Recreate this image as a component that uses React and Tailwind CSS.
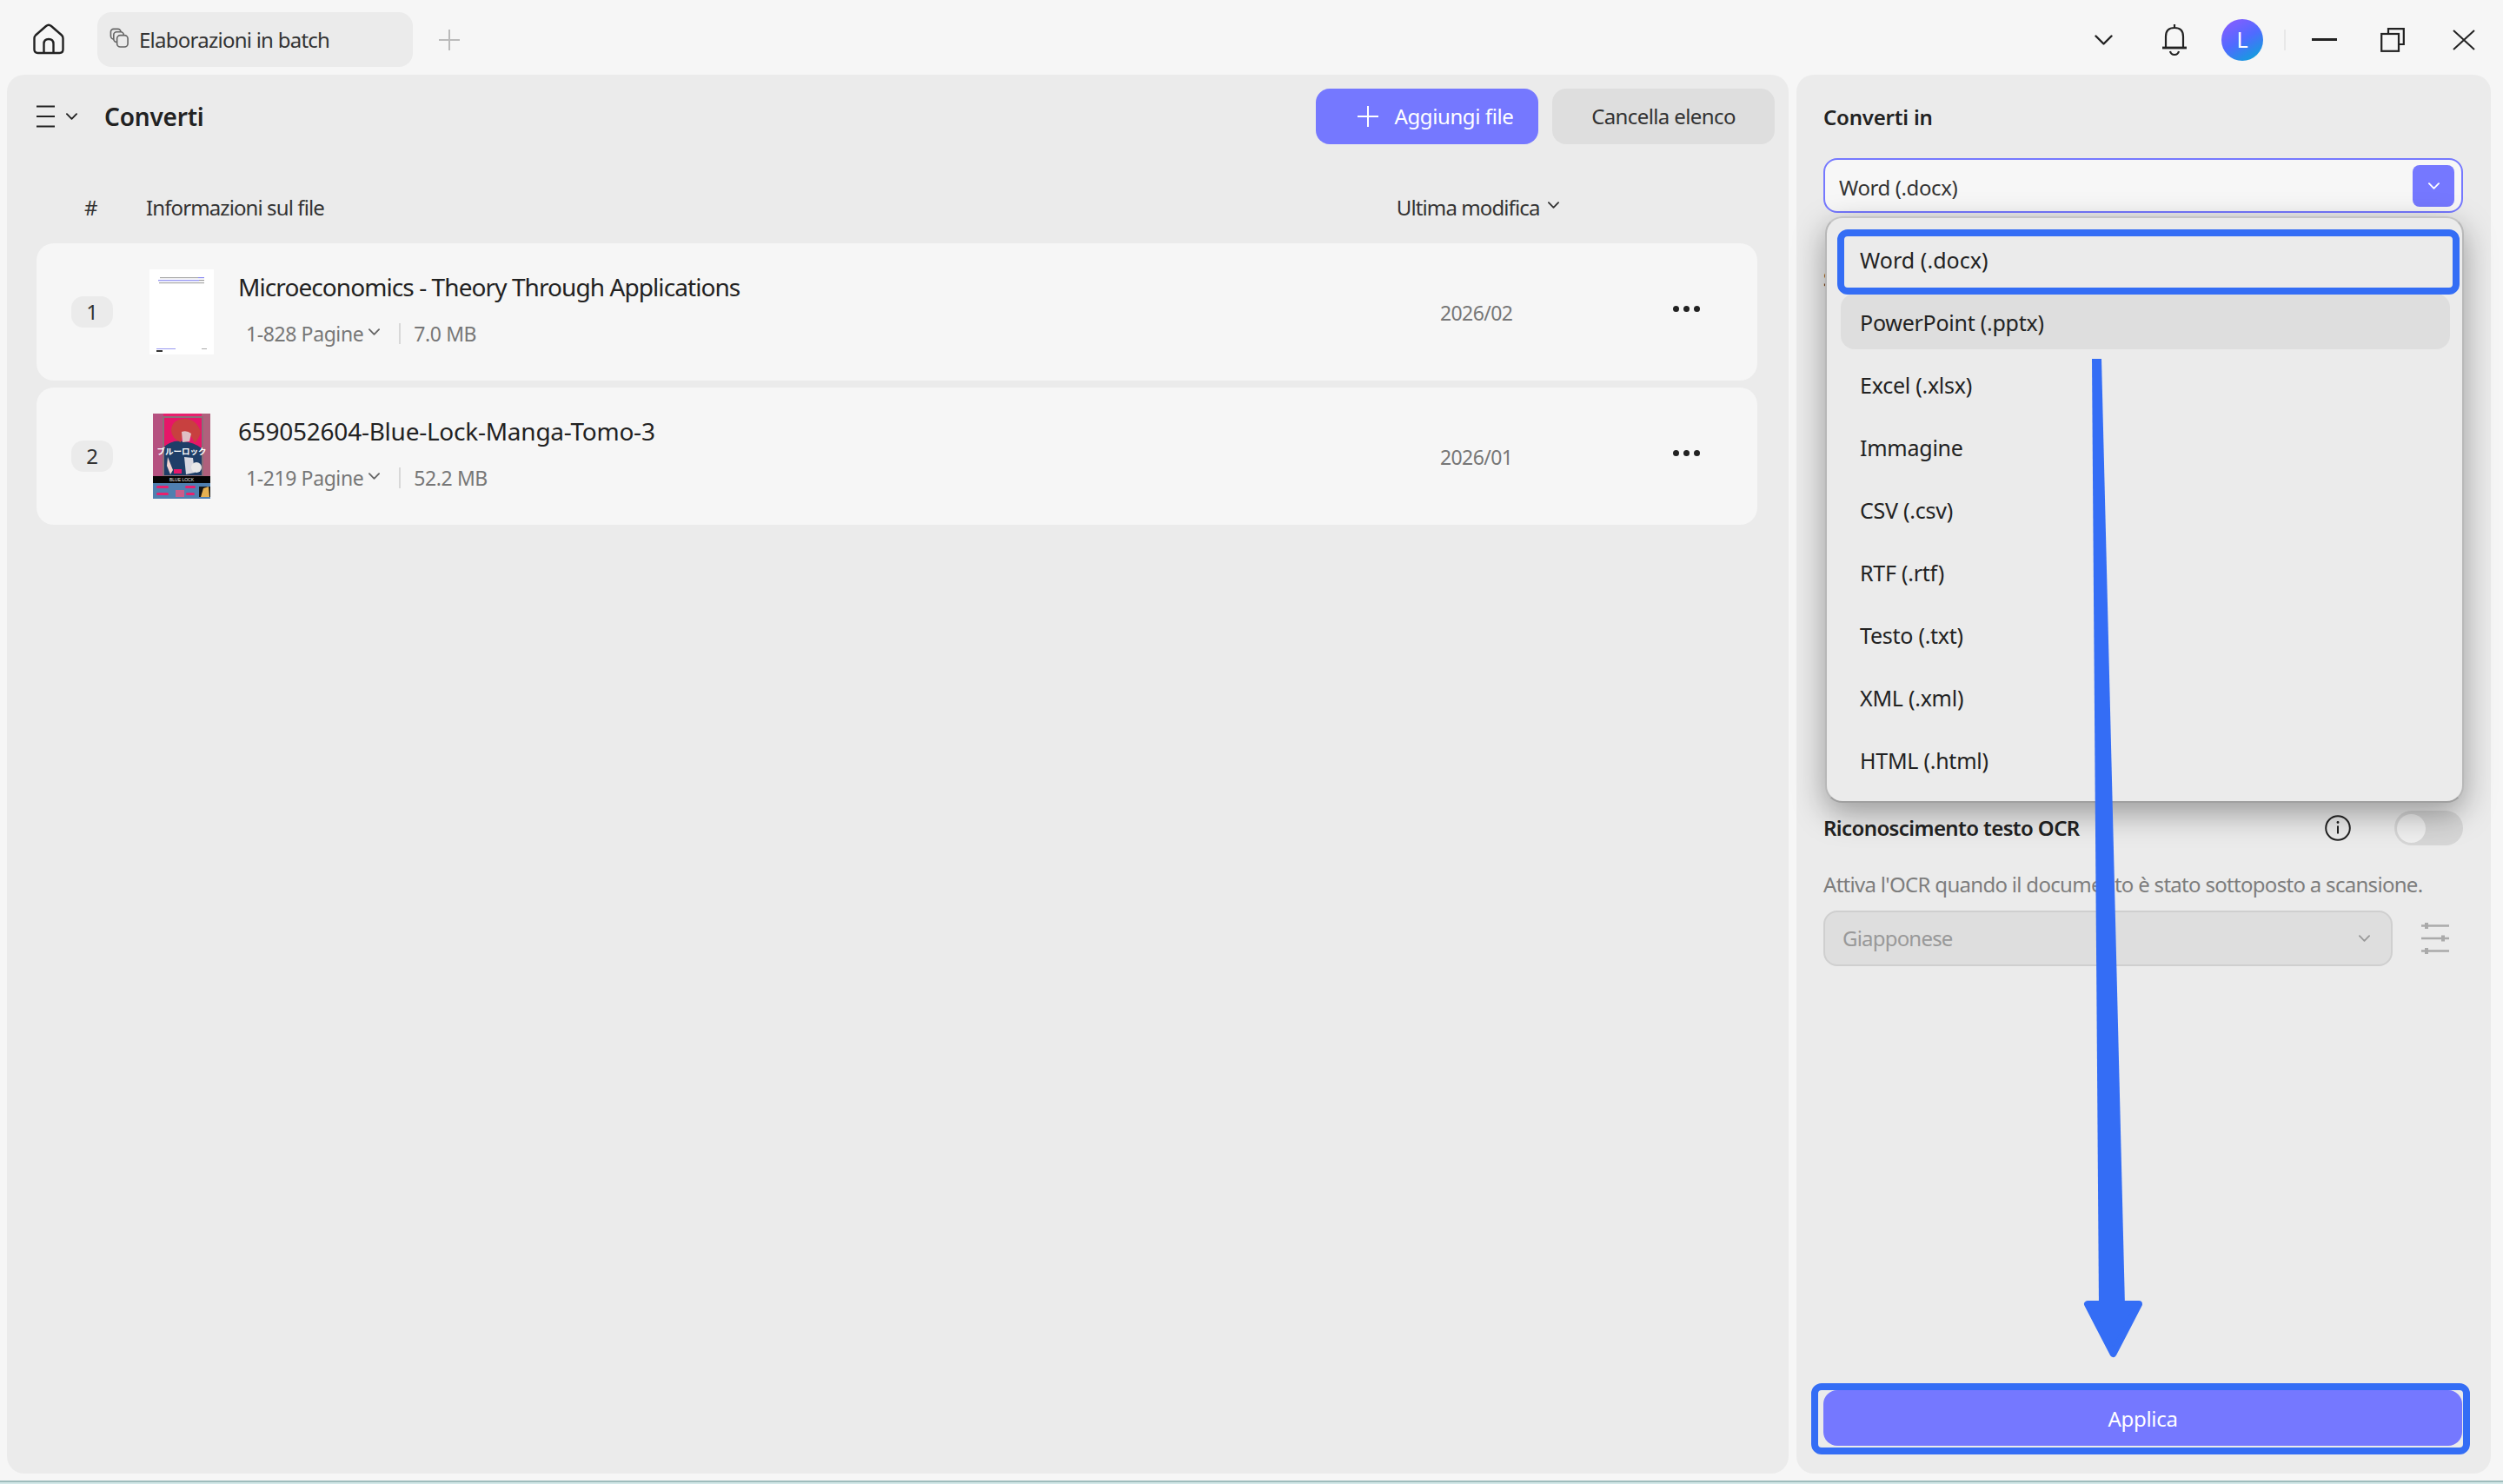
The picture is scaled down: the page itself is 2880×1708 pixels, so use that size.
const FORMATS = ["Excel (.xlsx)", "Immagine", "CSV (.csv)", "RTF (.rtf)", "Testo (.txt)", "XML (.xml)", "HTML (.html)"];

function Chevron({ className, stroke = "#222", width = 2 }) {
  return (
    <svg viewBox="0 0 14 8" className={className} fill="none">
      <path d="M1 1l6 6 6-6" stroke={stroke} strokeWidth={width} strokeLinecap="round" strokeLinejoin="round" />
    </svg>
  );
}

function DocThumb() {
  return (
    <svg viewBox="0 0 74 98" className="w-[74px] h-[98px] shrink-0">
      <rect width="74" height="98" fill="#fff" />
      <rect x="12" y="9" width="44" height="1.2" fill="#aaa" />
      <rect x="56" y="9" width="7" height="1.2" fill="#8c8cf0" />
      <rect x="10" y="12" width="47" height="1.4" fill="#9a9af2" />
      <rect x="57" y="12" width="6" height="1.2" fill="#999" />
      <rect x="11" y="15" width="52" height="1.2" fill="#aaa" />
      <rect x="8" y="91" width="22" height="1" fill="#9a9af2" />
      <rect x="8" y="93" width="7" height="2" fill="#333" />
      <rect x="60" y="91" width="6" height="1" fill="#aaa" />
    </svg>
  );
}

function MangaThumb() {
  return (
    <svg viewBox="0 0 66 98" className="w-[66px] h-[98px] shrink-0">
      <rect width="66" height="98" fill="#e8206e" />
      <rect x="0" y="0" width="12" height="72" fill="#8a7a90" opacity="0.55" />
      <rect x="56" y="0" width="10" height="72" fill="#b0607c" />
      <rect x="12" y="4" width="45" height="68" fill="#e61668" stroke="#8a6f78" strokeWidth="2" />
      <path d="M13 38q10-8 22-6 12 1 21 8v31H13z" fill="#1e3e68" />
      <path d="M21 20q0-13 15-14 14 0 19 15-2 8-7 13l-3-6q-3-5-11-4l-2 9q-10-4-11-13z" fill="#c8403f" />
      <path d="M33 21q6-2 11 2l-2 9-8 1z" fill="#dfc0c4" />
      <path d="M36 50l10 1 2 17-10 2z" fill="#d8d8e0" />
      <circle cx="50" cy="62" r="6" fill="#e8e8e8" />
      <path d="M17 50l6 15-3 5-4-10z" fill="#f1d4d0" />
      <rect x="24" y="64" width="9" height="5" fill="#e61668" />
      <text x="33" y="47" textAnchor="middle" fontSize="9.500" fontWeight="700" fill="#fff" fontFamily="'Noto Sans CJK JP', sans-serif">ブルーロック</text>
      <rect x="0" y="72" width="66" height="8" fill="#050505" />
      <text x="33" y="78" textAnchor="middle" fontSize="5" fill="#eee" fontFamily="'Liberation Sans', sans-serif">BLUE LOCK</text>
      <rect x="0" y="80" width="66" height="18" fill="#4f7fb0" />
      <rect x="4" y="83" width="14" height="3" rx="1.5" fill="#e8206e" />
      <rect x="37" y="83" width="12" height="3" rx="1.5" fill="#e8206e" />
      <rect x="4" y="91" width="14" height="3" rx="1.5" fill="#e8206e" />
      <rect x="26" y="88" width="10" height="8" fill="#c95d8a" />
      <rect x="38" y="91" width="10" height="3" rx="1.5" fill="#e8206e" />
      <rect x="53" y="84" width="13" height="12" fill="#151515" />
      <path d="M55 96l3-10 6-2 1 12z" fill="#e5b050" />
    </svg>
  );
}

function FileRow({ index, title, titleClass, pages, size, date, thumb }) {
  return (
    <div className="h-[158px] rounded-[20px] bg-[#f6f6f6] flex items-center pl-10">
      <div className="w-12 h-9 rounded-[14px] bg-[#ebebeb] flex items-center justify-center text-[24px] text-[#333] shrink-0">{index}</div>
      <div className="w-[74px] ml-[42px] flex justify-center shrink-0">{thumb}</div>
      <div className="ml-[28px] w-[1387px] -translate-y-[4px]">
        <div className={`text-[28px] leading-[38px] text-[#222] ${titleClass}`}>{title}</div>
        <div className="flex items-center mt-[19px] ml-[9px] text-[23px] leading-8 text-[#777] tracking-[-0.4px]">
          <span>{pages}</span>
          <Chevron className="w-[13px] h-2 ml-[6px] -translate-y-[2px]" stroke="#666" />
          <span className="w-[2px] h-6 bg-[#d8d8d8] ml-[22px] mr-[15px]" />
          <span>{size}</span>
        </div>
      </div>
      <div className="w-[83px] -ml-[4px] text-[23px] text-[#777] tracking-[-0.6px] whitespace-nowrap translate-y-[1px]">{date}</div>
      <div className="flex gap-[5px] ml-[185px] -translate-y-[4px]">
        <span className="w-[7px] h-[7px] rounded-full bg-[#222]" />
        <span className="w-[7px] h-[7px] rounded-full bg-[#222]" />
        <span className="w-[7px] h-[7px] rounded-full bg-[#222]" />
      </div>
    </div>
  );
}

export default function App() {
  return (
    <div className="relative w-[2880px] h-[1708px] overflow-hidden bg-[#f6f6f6] flex flex-col font-['Noto_Sans',sans-serif]">
      {/* Title bar */}
      <div className="h-[86px] shrink-0 flex items-center pl-[38px] pt-[5px] relative">
        <svg viewBox="0 0 36 36" className="w-9 h-9 -translate-y-[1px]" fill="none" stroke="#222" strokeWidth="2.4">
          <path d="M3 13.5L15 3q3-2.4 6 0l12 10.500q1.500 1.400 1.500 3.500V30q0 4-4 4H5.500q-4 0-4-4V17q0-2 1.500-3.500z" />
          <path d="M12.500 34V23.500q0-5.500 5.500-5.500t5.500 5.500V34" />
        </svg>
        <div className="ml-[38px] w-[363px] h-[63px] rounded-2xl bg-[#ebebeb] flex items-center pl-[14px]">
          <svg viewBox="0 0 24 24" className="w-[23px] h-[23px] -translate-y-[2px]" fill="none" stroke="#666" strokeWidth="1.7">
            <rect x="1.500" y="1.500" width="12" height="12" rx="3.500" />
            <rect x="5" y="5" width="12" height="12" rx="3.500" fill="#ebebeb" />
            <rect x="9" y="9" width="13" height="14" rx="4" fill="#ebebeb" />
          </svg>
          <span className="ml-[11px] text-[24px] text-[#333] tracking-[-0.75px] whitespace-nowrap">Elaborazioni in batch</span>
        </div>
        <svg viewBox="0 0 24 24" className="w-6 h-6 ml-[30px]" fill="none" stroke="#bbb" strokeWidth="2">
          <path d="M12 0v24M0 12h24" />
        </svg>

        <div className="ml-auto flex items-center pr-[32px]">
          <Chevron className="w-[23px] h-3" stroke="#222" width={1.6} />
          <svg viewBox="0 0 30 38" className="w-[30px] h-[38px] ml-[55px]" fill="none" stroke="#222" strokeWidth="2.2">
            <path d="M15 1v4M5 27V15q0-10 10-10t10 10v12" />
            <path d="M1 28h28" strokeWidth="2.800" />
            <path d="M10 32q1 4 5 4t5-4" />
          </svg>
          <div className="ml-[39px] w-12 h-12 rounded-full bg-[linear-gradient(150deg,#8a5cff_5%,#4f6bff_50%,#0aa5d8_95%)] flex items-center justify-center text-white text-[25px]">L</div>
          <span className="w-[2px] h-6 bg-[#e8e8e8] ml-6" />
          <span className="w-[29px] h-[3px] bg-[#222] ml-[30px]" />
          <svg viewBox="0 0 28 28" className="w-7 h-7 ml-[50px]" fill="none" stroke="#222" strokeWidth="2.2">
            <path d="M9 7V1.200h17.800V19H21" />
            <rect x="1.200" y="7" width="19.800" height="19.800" />
          </svg>
          <svg viewBox="0 0 26 24" className="w-[26px] h-6 ml-[55px]" fill="none" stroke="#222" strokeWidth="2">
            <path d="M1 1l24 22M25 1L1 23" />
          </svg>
        </div>
      </div>

      {/* Panels */}
      <div className="flex-1 flex pl-2 gap-[9px]">
        <div className="w-[2050px] rounded-[20px] bg-[#ebebeb] pt-4 pl-[34px] pr-4">
          <div className="flex items-center h-16">
            <svg viewBox="0 0 22 26" className="w-[22px] h-[26px]" fill="none" stroke="#222" strokeWidth="2.200">
              <path d="M0 1.500h21M0 13h21M0 24.500h21" />
            </svg>
            <Chevron className="w-[13px] h-2 ml-[12px]" stroke="#222" />
            <span className="ml-[31px] text-[28px] font-semibold text-[#222] tracking-[-0.2px]">Converti</span>
            <button className="ml-auto w-64 h-16 rounded-2xl bg-[#7578ff] pl-[19px] flex items-center justify-center text-white text-[24px] tracking-[-0.4px]">
              <svg viewBox="0 0 24 24" className="w-6 h-6 mr-[19px]" fill="none" stroke="#fff" strokeWidth="2">
                <path d="M12 0v24M0 12h24" />
              </svg>
              Aggiungi file
            </button>
            <button className="ml-4 w-64 h-16 rounded-2xl bg-[#dedede] text-[#333] text-[24px] tracking-[-0.6px]">Cancella elenco</button>
          </div>
          <div className="flex items-center h-[40px] mt-[53px] text-[24px] text-[#333] tracking-[-0.9px]">
            <span className="ml-[55px] w-[71px]">#</span>
            <span>Informazioni sul file</span>
            <span className="ml-[1234px] whitespace-nowrap">Ultima modifica</span>
            <Chevron className="w-[13px] h-2 ml-[10px] -translate-y-[3px]" stroke="#333" />
          </div>
          <div className="mt-[21px] w-[1980px] flex flex-col gap-2">
            <FileRow index="1" title="Microeconomics - Theory Through Applications" titleClass="tracking-[-0.92px]" pages="1-828 Pagine" size="7.0 MB" date="2026/02" thumb={<DocThumb />} />
            <FileRow index="2" title="659052604-Blue-Lock-Manga-Tomo-3" titleClass="tracking-[-0.25px]" pages="1-219 Pagine" size="52.2 MB" date="2026/01" thumb={<MangaThumb />} />
          </div>
        </div>

        <div className="relative w-[799px] rounded-[20px] bg-[#ebebeb] px-[31px] flex flex-col">
          <div className="mt-[31px] h-9 flex items-center text-[24px] font-semibold text-[#222] tracking-[-0.2px]">Converti in</div>
          <div className="mt-[29px] h-[63px] w-[736px] rounded-2xl border-2 border-[#7578ff] bg-[#f7f7f7] flex items-center pl-4 pr-2 text-[24px] text-[#333] tracking-[-0.4px]">
            <span className="translate-y-[2px]">Word (.docx)</span>
            <span className="ml-auto w-12 h-12 rounded-lg bg-[#7578ff] flex items-center justify-center">
              <Chevron className="w-[13px] h-2" stroke="#fff" />
            </span>
          </div>
          <span className="mt-[60px] text-[24px] font-semibold text-[#222] leading-[32px]">S</span>

          {/* OCR section */}
          <div className="mt-[596px] h-10 flex items-center">
            <span className="w-[296px] text-[24px] font-semibold text-[#222] tracking-[-0.6px] whitespace-nowrap">Riconoscimento testo OCR</span>
            <svg viewBox="0 0 30 30" className="w-[30px] h-[30px] ml-[281px]" fill="none" stroke="#222" strokeWidth="2">
              <circle cx="15" cy="15" r="13.800" />
              <path d="M15 12.500v9" />
              <circle cx="15" cy="8.500" r="1.400" fill="#222" stroke="none" />
            </svg>
            <span className="ml-[50px] w-[79px] h-10 rounded-full bg-[#d6d6d6] flex items-center pl-[3px]">
              <span className="w-[33px] h-[33px] rounded-full bg-[#efefef]" />
            </span>
          </div>
          <div className="mt-[29px] h-8 flex items-center text-[24px] text-[#7d7d7d] tracking-[-0.7px] whitespace-nowrap">Attiva l'OCR quando il documento è stato sottoposto a scansione.</div>
          <div className="mt-[14px] flex items-center">
            <div className="w-[655px] h-16 rounded-2xl border-2 border-[#cfcfcf] bg-[#dedede] flex items-center pl-5 pr-[24px] text-[24px] text-[#999] tracking-[-0.8px]">
              <span>Giapponese</span>
              <Chevron className="w-[13px] h-2 ml-auto" stroke="#999" />
            </div>
            <svg viewBox="0 0 32 38" className="w-8 h-[38px] ml-[33px]" fill="none" stroke="#aaa" strokeWidth="2.4">
              <path d="M0 4.500h32M0 19h32M0 33.500h32" />
              <path d="M6 1v7M25 15.500v7M6 30v7" strokeWidth="4" />
            </svg>
          </div>

          {/* Apply */}
          <div className="mt-auto mb-[32px] relative">
            <button className="w-[735px] h-16 pt-[2px] rounded-2xl bg-[#7578ff] text-white text-[24px] tracking-[-0.3px]">Applica</button>
            <div className="absolute -top-2 -left-[14px] w-[758px] h-[82px] rounded-[12px] border-8 border-[#346df5] pointer-events-none" />
          </div>

          {/* Open dropdown */}
          <div className="absolute left-[33px] top-[163px] w-[735px] h-[675px] rounded-[20px] border-2 border-t-[#c6c6c6] border-x-[#b8b8b8] border-b-[#a0a0a0] bg-[#ebebeb] shadow-[0_12px_36px_rgba(0,0,0,0.35)] pt-[15px] pl-[16px] pr-[14px]">
            <div className="h-[64px] flex items-center pl-[22px] pt-[3px] rounded-2xl text-[25px] text-[#222] tracking-[0.05px]">Word (.docx)</div>
            <div className="mt-2 h-[64px] flex items-center pl-[22px] pt-[3px] rounded-2xl bg-[#dedede] text-[25px] text-[#222] tracking-[-0.25px]">PowerPoint (.pptx)</div>
            {FORMATS.map((f) => (
              <div key={f} className="mt-2 h-[64px] flex items-center pl-[22px] pt-[3px] text-[25px] text-[#222] tracking-[-0.25px]">{f}</div>
            ))}
            <div className="absolute left-[12px] top-[13px] w-[716px] h-[75px] rounded-[12px] border-8 border-[#346df5]" />
          </div>
        </div>
      </div>

      {/* Bottom strip */}
      <div className="mt-2 h-1 shrink-0 bg-[linear-gradient(#9fbcbc_50%,#d3e8e8_50%)]" />

      {/* Annotation arrow */}
      <svg viewBox="0 0 2880 1708" className="absolute left-0 top-0 w-[2880px] h-[1708px] pointer-events-none">
        <path d="M2407 413h11l27 1090h-30z" fill="#346df5" />
        <path d="M2402 1501h59l-29.500 57z" fill="#346df5" stroke="#346df5" strokeWidth="8" strokeLinejoin="round" />
      </svg>
    </div>
  );
}
